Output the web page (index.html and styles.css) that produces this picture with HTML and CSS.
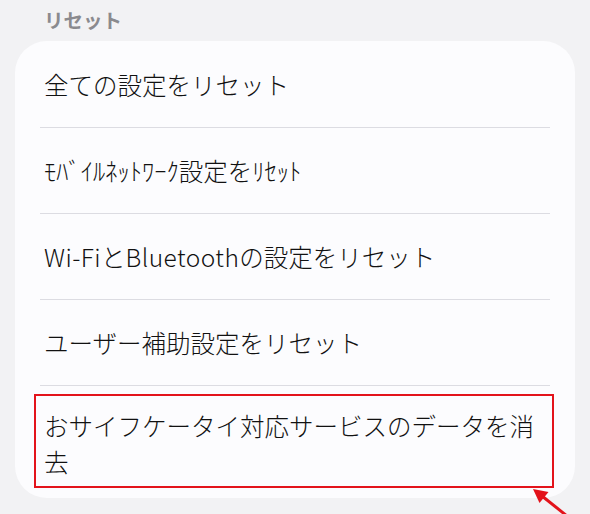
FILE: index.html
```html
<!DOCTYPE html>
<html lang="ja">
<head>
<meta charset="utf-8">
<link rel="stylesheet" href="styles.css">
</head>
<body>
<div class="screen">
  <div class="section-title">リセット</div>
  <div class="card">
    <div class="row">全ての設定をリセット</div>
    <div class="row">ﾓﾊﾞｲﾙﾈｯﾄﾜｰｸ設定をﾘｾｯﾄ</div>
    <div class="row"><span class="latin">Wi-Fi</span>と<span class="latin">Bluetooth</span>の設定をリセット</div>
    <div class="row">ユーザー補助設定をリセット</div>
    <div class="row last">おサイフケータイ対応サービスのデータを消去<span class="highlight"></span></div>
  </div>
  <svg class="arrow" width="590" height="514" viewBox="0 0 590 514">
    <line x1="542" y1="496" x2="572" y2="520" stroke="#e3131b" stroke-width="3"/>
    <polygon points="533,489 539.5,503 548.5,492" fill="#e3131b"/>
  </svg>
</div>
</body>
</html>
```
FILE: styles.css
```css
html, body {
  margin: 0;
  padding: 0;
  background: #f2f2f4;
}
body {
  font-family: "Noto Sans CJK JP", "Noto Sans", sans-serif;
  color: #111;
}
.screen {
  position: relative;
  width: 590px;
  height: 514px;
  overflow: hidden;
}
.section-title {
  padding: 8px 0 0 44px;
  font-size: 19.5px;
  line-height: 24px;
  font-weight: 700;
  color: #8a8a8e;
}
.card {
  margin: 9px 15px 0 15px;
  background: #fcfcfe;
  border-radius: 32px;
  padding: 0 25px;
}
.row {
  position: relative;
  padding: 25px 0 24px 4px;
  font-size: 24.5px;
  line-height: 36px;
  font-weight: 300;
  border-bottom: 1px solid #dcdce2;
  white-space: nowrap;
}
.row:first-child {
  padding-top: 26px;
}
.latin {
  letter-spacing: 0.45px;
}
.row.last {
  border-bottom: none;
  white-space: normal;
  padding: 22px 0 18px 4px;
}
.highlight {
  position: absolute;
  left: -6px;
  right: -4px;
  top: 8px;
  bottom: 10px;
  border: 2px solid #e3131b;
}
.arrow {
  position: absolute;
  left: 0;
  top: 0;
  pointer-events: none;
}
```
